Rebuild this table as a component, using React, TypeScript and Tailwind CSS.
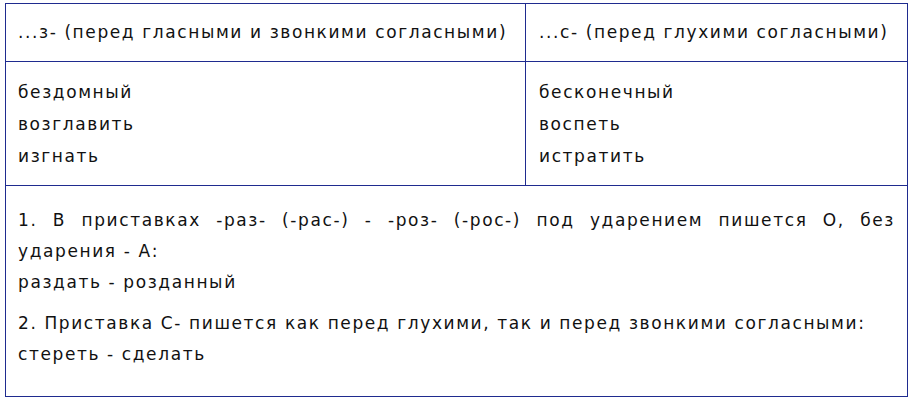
import React from "react";

export default function App() {
  const b = "border-[#1f2b8f]";
  return (
    <div className="w-[913px] h-[400px] bg-white pt-[3px] pl-[5px]" style={{ fontFamily: '"DejaVu Sans", Verdana, sans-serif' }}>
      <div className={`w-[903px] h-[394px] border ${b} flex flex-col text-[17px] tracking-[1.6px] text-[#111]`}>
        <div className={`flex h-[58px] border-b ${b}`}>
          <div className={`w-[520px] border-r ${b} pl-[12px] flex items-center`}>...з- (перед гласными и звонкими согласными)</div>
          <div className="flex-1 pl-[13px] flex items-center">...с- (перед глухими согласными)</div>
        </div>
        <div className={`flex h-[124px] border-b ${b}`}>
          <div className={`w-[520px] border-r ${b} pl-[12px] pt-[14px] leading-[32px]`}>
            <div>бездомный</div>
            <div>возглавить</div>
            <div>изгнать</div>
          </div>
          <div className="flex-1 pl-[13px] pt-[14px] leading-[32px]">
            <div>бесконечный</div>
            <div>воспеть</div>
            <div>истратить</div>
          </div>
        </div>
        <div className="flex-1 pl-[12px] pr-[12px] pt-[19px] leading-[31px]">
          <p className="text-justify [text-align-last:justify]">1. В приставках -раз- (-рас-) - -роз- (-рос-) под ударением пишется О, без</p>
          <p>ударения - А:</p>
          <p>раздать - розданный</p>
          <p className="mt-[9px] leading-[32px]">2. Приставка С- пишется как перед глухими, так и перед звонкими согласными:</p>
          <p>стереть - сделать</p>
        </div>
      </div>
    </div>
  );
}
